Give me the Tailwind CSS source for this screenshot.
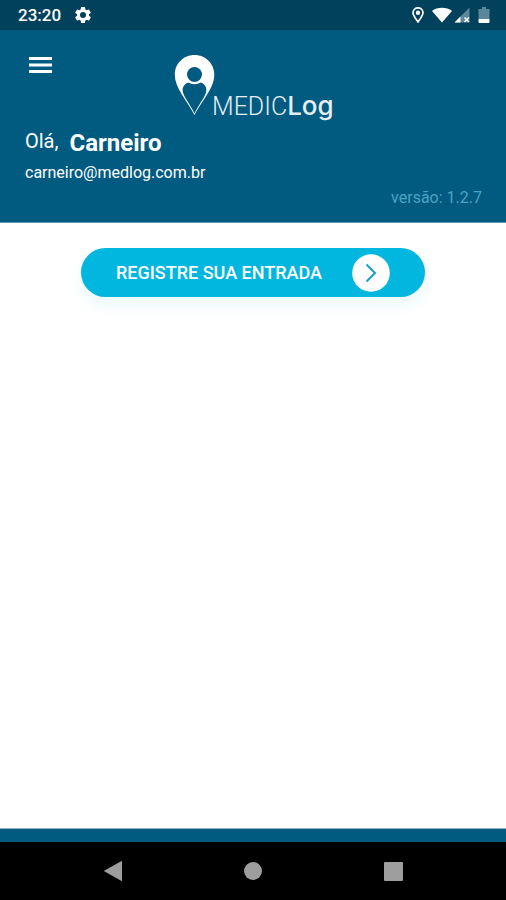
<!DOCTYPE html>
<html lang="pt-BR">
<head>
<meta charset="utf-8">
<meta name="viewport" content="width=device-width, initial-scale=1">
<title>MedicLog</title>
<script src="https://cdn.jsdelivr.net/npm/@tailwindcss/browser@4"></script>
</head>
<body class="flex min-h-screen flex-col bg-white font-['Roboto',sans-serif] text-white">
  <div class="flex h-[30px] items-center justify-between bg-[#01415c] pl-[18px] pr-4">
    <div class="flex items-center gap-3">
      <span class="text-[17px] leading-[30px] font-medium">23:20</span>
      <svg class="size-5" viewBox="0 0 24 24" fill="currentColor" aria-hidden="true"><path d="M19.14 12.94c.04-.3.06-.61.06-.94 0-.32-.02-.64-.07-.94l2.03-1.58a.49.49 0 0 0 .12-.61l-1.92-3.32a.49.49 0 0 0-.59-.22l-2.39.96c-.5-.38-1.03-.7-1.62-.94l-.36-2.54a.48.48 0 0 0-.48-.41h-3.84a.47.47 0 0 0-.47.41l-.36 2.54c-.59.24-1.13.57-1.62.94l-2.39-.96a.48.48 0 0 0-.59.22L2.74 8.87a.48.48 0 0 0 .12.61l2.03 1.58c-.05.3-.09.63-.09.94s.02.64.07.94l-2.03 1.58a.49.49 0 0 0-.12.61l1.92 3.32c.12.22.37.29.59.22l2.39-.96c.5.38 1.03.7 1.62.94l.36 2.54c.05.24.24.41.48.41h3.84c.24 0 .44-.17.47-.41l.36-2.54c.59-.24 1.13-.56 1.62-.94l2.39.96c.22.08.47 0 .59-.22l1.92-3.32a.48.48 0 0 0-.12-.61zM12 15.6a3.6 3.6 0 1 1 0-7.2 3.6 3.6 0 0 1 0 7.2z"/></svg>
    </div>
    <div class="flex items-center">
      <svg class="mr-2 h-4 w-3" viewBox="0 0 12 16" fill="none" stroke="currentColor" aria-hidden="true"><path stroke-width="1.7" d="M6 15C3.500 11.500 1 8.500 1 5.800a5 5 0 0 1 10 0C11 8.500 8.500 11.500 6 15z"/><circle cx="6" cy="5.800" r="2.200" fill="currentColor" stroke="none"/></svg>
      <svg class="mr-0.5 h-4 w-5" viewBox="0 0 20 16" fill="currentColor" aria-hidden="true"><path d="M0 4C5.500-.4 14.500-.4 20 4L10 15.500z"/></svg>
      <svg class="mr-2 h-4 w-4" viewBox="0 0 16 16" aria-hidden="true"><path fill="#5c8699" d="M15.500.5v15H.5z"/><path fill="#fff" d="M6.500 9.500v6h-6z"/><path stroke="#fff" stroke-width="1.500" d="m10.500 10.500 4.500 4.500m0-4.500-4.500 4.500"/></svg>
      <svg class="h-4 w-3" viewBox="0 0 12 16" aria-hidden="true"><path fill="#5c8699" d="M4 0h4v2h3.500v10H.5V2H4z"/><path fill="#fff" d="M.5 12h11v3a1 1 0 0 1-1 1h-9a1 1 0 0 1-1-1z"/></svg>
    </div>
  </div>

  <header class="border-b border-[#5f95ae] bg-[#015a7f] px-6 pt-6 pb-3">
    <div class="grid grid-cols-[1fr_auto_1fr] items-start">
      <button type="button" aria-label="Menu" class="ml-[5px] w-[23px] pt-[3px]">
        <svg class="h-4 w-[23px]" viewBox="0 0 23 16" fill="currentColor" aria-hidden="true"><path d="M0 0h23v3H0zM0 6.500h23v3H0zM0 13h23v3H0z"/></svg>
      </button>
      <svg class="h-[72px] w-[160px]" viewBox="0 0 160 72" role="img" aria-label="MedicLog">
        <path fill="#fff" d="M21.500 1C10.400 1 1.800 9.600 1.800 20.500C1.800 34 13 45 21.500 61C30 45 41.300 34 41.300 20.500C41.300 9.600 32.600 1 21.500 1z"/>
        <circle cx="21.500" cy="20.500" r="7.500" fill="#015a7f"/>
        <path fill="#015a7f" d="M15.500 28.500c3.500 2.200 8.500 2.200 12 0 4.200 1.200 6.300 5 5.800 8.500C32.500 43 26.500 49 21.500 59.500C16.500 49 10.500 43 9.700 37c-.5-3.500 1.600-7.300 5.800-8.500z"/>
        <text x="39" y="61" fill="#e4eef3" font-size="25"><tspan font-family="Roboto, sans-serif" font-weight="300">MEDIC</tspan><tspan font-family="Inter, sans-serif" font-weight="500" font-size="26">Log</tspan></text>
      </svg>
    </div>
    <div class="flex gap-[11px] pl-px">
      <span class="text-xl leading-[30px]">Olá,</span>
      <h1 class="text-2xl leading-[34px] font-bold">Carneiro</h1>
    </div>
    <p class="pl-px text-base leading-[26px]">carneiro@medlog.com.br</p>
    <p class="text-right text-base leading-6 text-[#4ba4c4]">versão: 1.2.7</p>
  </header>

  <main class="flex flex-1 flex-col items-center px-[81px] pt-[25px]">
    <button type="button" class="flex h-[49px] w-full items-center justify-between rounded-full bg-[#01b7df] px-[35px] shadow-[0_8px_16px_rgba(1,183,223,0.08)]">
      <span class="text-lg font-medium whitespace-nowrap">REGISTRE SUA ENTRADA</span>
      <svg class="size-[38px]" viewBox="0 0 38 38" aria-hidden="true"><circle cx="19" cy="19" r="18.800" fill="#fff"/><path d="m14.500 10.500 8.500 8.500-8.500 8.500" fill="none" stroke="#189fc4" stroke-width="2"/></svg>
    </button>
  </main>

  <div class="h-[14px] border-t border-[#8fb5c6] bg-[#015a7f]"></div>
  <nav class="grid h-[58px] grid-cols-[1fr_56px_1fr] items-center bg-black text-[#9e9e9e]" aria-label="Sistema">
    <button type="button" aria-label="Voltar" class="flex justify-center"><svg class="h-[22px] w-5" viewBox="0 0 20 22" fill="currentColor" aria-hidden="true"><path d="M19 .8v20.400L.8 11z"/></svg></button>
    <button type="button" aria-label="Início" class="flex justify-center"><span class="size-[18px] rounded-full bg-current"></span></button>
    <button type="button" aria-label="Recentes" class="flex justify-center"><span class="size-[19px] rounded-[1px] bg-current"></span></button>
  </nav>
</body>
</html>
